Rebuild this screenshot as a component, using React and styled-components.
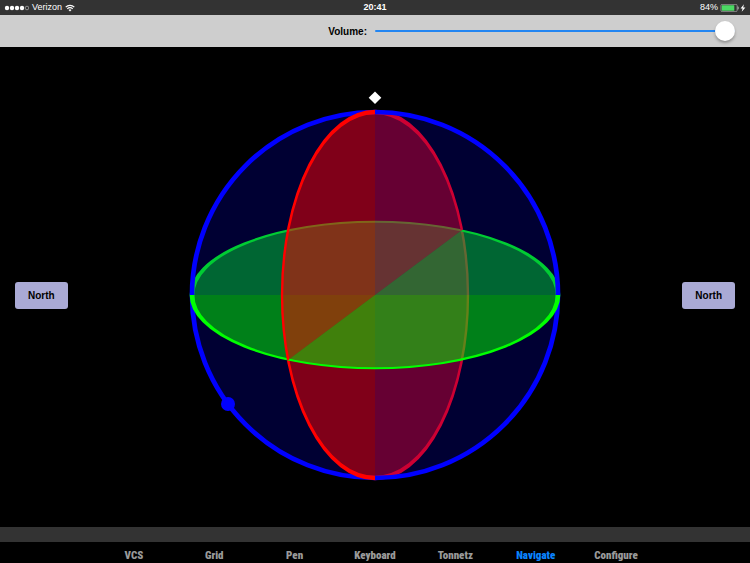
import { useState } from "react";
import styled, { createGlobalStyle } from "styled-components";

const GlobalStyle = createGlobalStyle`
  * {
    box-sizing: border-box;
  }
  body {
    margin: 0;
    background: #000;
    color: #000;
    font-family: "Liberation Sans", Arial, sans-serif;
    font-size: 10px;
  }
`;

const Page = styled.div`
  display: flex;
  flex-direction: column;
  min-height: 100vh;
`;

const StatusBar = styled.header`
  display: grid;
  grid-template-columns: 1fr auto 1fr;
  align-items: center;
  height: 15px;
  padding: 0 4px;
  background: #333;
  color: #fff;
  font-size: 9px;
  line-height: 15px;
`;

const StatusGroup = styled.div`
  display: flex;
  align-items: center;
  justify-content: ${props => (props.$end ? "flex-end" : "flex-start")};
  gap: ${props => (props.$end ? "2px" : "3px")};
`;

const Clock = styled.time`
  font-weight: bold;
`;

const VolumeBar = styled.div`
  display: grid;
  grid-template-columns: 1fr 1fr;
  align-items: center;
  height: 32px;
  padding: 0 15px;
  background: #cecece;
`;

const VolumeLabel = styled.label`
  padding-right: 8px;
  font-weight: bold;
  text-align: right;
`;

const VolumeSlider = styled.input`
  appearance: none;
  width: 100%;
  height: 20px;
  margin: 0;
  background: transparent;
  &::-webkit-slider-runnable-track {
    height: 2px;
    border-radius: 1px;
    background: linear-gradient(
      to right,
      #2386f2 ${props => props.value}%,
      #a5a5a5 ${props => props.value}%
    );
  }
  &::-webkit-slider-thumb {
    appearance: none;
    width: 20px;
    height: 20px;
    margin-top: -9px;
    border-radius: 50%;
    background: #fff;
    box-shadow: 0 2px 3px rgba(0, 0, 0, 0.3);
  }
`;

const Stage = styled.main`
  display: flex;
  flex: 1;
  align-items: center;
  justify-content: space-between;
  padding: 16px 15px 0;
`;

const NorthButton = styled.button`
  flex: none;
  height: 27px;
  padding: 0 13px;
  border: none;
  border-radius: 3px;
  background: #aaaad5;
  color: #000;
  font: bold 10px "Liberation Sans", Arial, sans-serif;
`;

const SphereDrawing = styled.svg`
  flex: 0 1 370px;
  min-width: 0;
  overflow: visible;
`;

const Divider = styled.div`
  height: 15px;
  background: #333;
`;

const TabBar = styled.nav`
  display: grid;
  grid-template-columns: repeat(7, 1fr);
  width: 75%;
  height: 21px;
  margin: 0 auto;
  padding-top: 6px;
`;

const Tab = styled.a`
  color: ${props => (props.$active ? "#0a84ff" : "#9a9a9a")};
  font-family: "Liberation Sans Narrow", "Roboto Condensed", "Arial Narrow", sans-serif;
  font-size: 11px;
  font-weight: 900;
  line-height: 15px;
  text-align: center;
  text-decoration: none;
`;

const tabs = ["VCS", "Grid", "Pen", "Keyboard", "Tonnetz", "Navigate", "Configure"];

const Signal = () => (
  <svg width="25" height="6" viewBox="0 0 25 6" aria-hidden="true">
    {[3, 8, 13, 18].map(x => (
      <circle key={x} cx={x} cy="3" r="2.2" fill="#fff" />
    ))}
    <circle cx="23" cy="3" r="1.8" fill="none" stroke="#ccc" strokeWidth="0.6" />
  </svg>
);

const Wifi = () => (
  <svg width="10" height="8" viewBox="0 0 10 8" fill="none" stroke="#fff" strokeWidth="1.2" aria-hidden="true">
    <path d="M0.7 3.1A6.1 6.1 0 0 1 9.3 3.1" />
    <path d="M2.3 4.8A3.8 3.8 0 0 1 7.7 4.8" />
    <path d="M5 7.4L3.5 5.9A2.1 2.1 0 0 1 6.5 5.9Z" fill="#fff" stroke="none" />
  </svg>
);

const Battery = () => (
  <svg width="26" height="8" viewBox="0 0 26 8" aria-hidden="true">
    <rect x="0.9" y="0.4" width="16.2" height="7.2" rx="1.2" fill="none" stroke="#bbb" strokeWidth="0.6" />
    <rect x="1.7" y="1.2" width="12.6" height="5.6" rx="0.5" fill="#4cd964" />
    <path d="M17.9 2.5Q19 4 17.9 5.5Z" fill="#bbb" stroke="#bbb" strokeWidth="0.5" />
    <path d="M23.9 0.3L20.6 4.6H22.6L21.7 7.8L25.4 3.4H23.2Z" fill="#fff" />
  </svg>
);

/* a circle seen at an angle, so its outline thins along the short axis */
const Disc = ({ color, scale, clip }) => (
  <g clipPath={`url(#${clip})`}>
    <g transform={`scale(${scale})`}>
      <circle r="183" fill={color} fillOpacity="0.5" />
      <circle r="183" fill="none" stroke={color} strokeWidth="4.7" />
    </g>
  </g>
);

const RED = "0.508 1";
const GREEN = "1 0.4";

/* painted back to front: the red disc is cut where it crosses the green one */
const Sphere = () => (
  <SphereDrawing viewBox="-185 -205 370 410" role="img" aria-label="Rotation sphere">
    <defs>
      <clipPath id="back-low"><path d="M0 0L200 -149.4V200H0Z" /></clipPath>
      <clipPath id="back-high"><path d="M0 0L200 -149.4V-200H0Z" /></clipPath>
      <clipPath id="front-low"><path d="M0 0L-200 149.4V200H0Z" /></clipPath>
      <clipPath id="front-high"><path d="M0 0L-200 149.4V-200H0Z" /></clipPath>
      <clipPath id="upper"><path d="M-200 -200H200V0H-200Z" /></clipPath>
      <clipPath id="lower"><path d="M-200 0H200V200H-200Z" /></clipPath>
    </defs>
    <Disc color="#f00" scale={RED} clip="back-low" />
    <Disc color="#0f0" scale={GREEN} clip="upper" />
    <Disc color="#f00" scale={RED} clip="back-high" />
    <circle r="183" fill="#00f" fillOpacity="0.2" />
    <circle r="183" fill="none" stroke="#00f" strokeWidth="4.7" />
    <Disc color="#f00" scale={RED} clip="front-low" />
    <Disc color="#0f0" scale={GREEN} clip="lower" />
    <Disc color="#f00" scale={RED} clip="front-high" />
    <circle cx="-147" cy="109" r="7" fill="#00f" />
    <path d="M0 -203.5L6.3 -197.2L0 -190.9L-6.3 -197.2Z" fill="#fff" />
  </SphereDrawing>
);

const App = () => {
  const [volume, setVolume] = useState(100);
  const [active, setActive] = useState("Navigate");

  return (
    <Page>
      <GlobalStyle />
      <StatusBar>
        <StatusGroup>
          <Signal />
          <span>Verizon</span>
          <Wifi />
        </StatusGroup>
        <Clock>20:41</Clock>
        <StatusGroup $end>
          <span>84%</span>
          <Battery />
        </StatusGroup>
      </StatusBar>
      <VolumeBar>
        <VolumeLabel htmlFor="volume">Volume:</VolumeLabel>
        <VolumeSlider
          id="volume"
          type="range"
          min="0"
          max="100"
          value={volume}
          onChange={e => setVolume(e.target.value)}
        />
      </VolumeBar>
      <Stage>
        <NorthButton>North</NorthButton>
        <Sphere />
        <NorthButton>North</NorthButton>
      </Stage>
      <Divider />
      <TabBar>
        {tabs.map(tab => (
          <Tab
            key={tab}
            href={`#${tab.toLowerCase()}`}
            $active={tab === active}
            onClick={() => setActive(tab)}
          >
            {tab}
          </Tab>
        ))}
      </TabBar>
    </Page>
  );
};

export default App;
